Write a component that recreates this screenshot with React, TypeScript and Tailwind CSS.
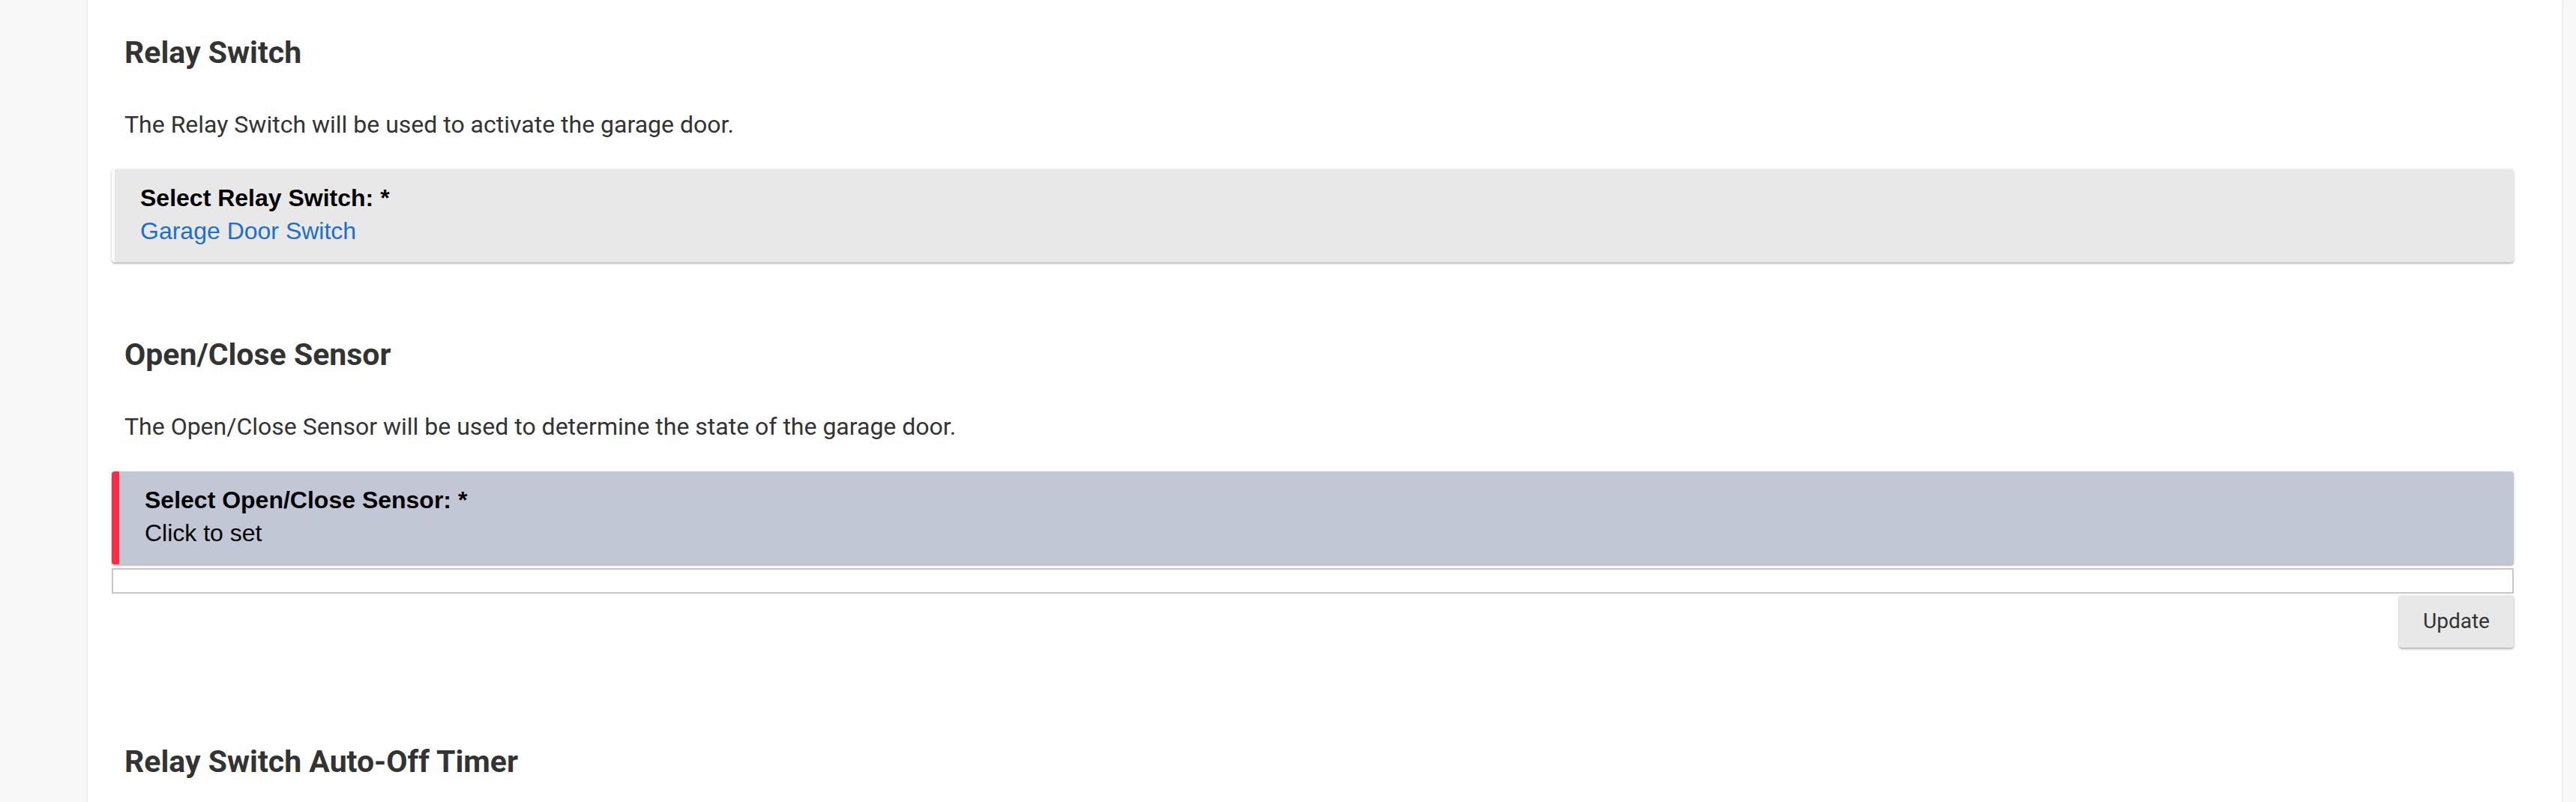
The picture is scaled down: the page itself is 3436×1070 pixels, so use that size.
import React from 'react';

const roboto = { fontFamily: 'Roboto, "Liberation Sans", sans-serif' };

function SectionTitle({ children, className = '' }: { children: React.ReactNode; className?: string }) {
  return (
    <h3 className={`px-[17px] text-[41px] leading-[48px] font-bold text-[#333333] ${className}`}>
      {children}
    </h3>
  );
}

function Description({ children }: { children: React.ReactNode }) {
  return <p className="mt-[52px] px-[17px] text-[32px] leading-[40px] text-[#333333]">{children}</p>;
}

function DeviceInput({
  label,
  value,
  invalid,
}: {
  label: string;
  value: string;
  invalid?: boolean;
}) {
  return (
    <div
      className={`mt-[40px] h-[124px] rounded-[4px] pl-[34px] pt-[16px] shadow-[0_2px_2px_rgba(0,0,0,0.22),0_0_4px_rgba(0,0,0,0.1)] ${
        invalid ? 'border-l-[10px] border-[#fd2b45] bg-[#c2c7d6]' : 'border-l-[4px] border-[#fbfbfb] bg-[#e8e8e8]'
      }`}
      style={{ fontFamily: '"Liberation Sans", Arial, sans-serif' }}
    >
      <div className="text-[32px] leading-[44px] font-bold text-black">{label}</div>
      <div className={`text-[32px] leading-[44px] ${invalid ? 'text-black' : 'text-[#1e6fc9]'}`}>{value}</div>
    </div>
  );
}

export default function App() {
  return (
    <div className="flex min-h-screen w-full bg-[#f8f8f8]" style={roboto}>
      <div className="w-[117px] shrink-0" />
      <main className="w-[3300px] shrink-0 bg-white pb-[40px] pl-[32px] pr-[64px] pt-[46px] shadow-[0_0_3px_rgba(0,0,0,0.15)]">
        {/* Relay switch */}
        <section>
          <SectionTitle>Relay Switch</SectionTitle>
          <Description>The Relay Switch will be used to activate the garage door.</Description>
          <DeviceInput label="Select Relay Switch: *" value="Garage Door Switch" />
        </section>

        {/* Contact sensor */}
        <section className="mt-[99px]">
          <SectionTitle>Open/Close Sensor</SectionTitle>
          <Description>The Open/Close Sensor will be used to determine the state of the garage door.</Description>
          <DeviceInput label="Select Open/Close Sensor: *" value="Click to set" invalid />
          <div className="mt-[5px] h-[34px] border-2 border-[#c6c6c6] bg-white" />
          <div className="mt-[2px] flex justify-end">
            <button className="h-[70px] w-[153px] rounded-[4px] bg-[#e8e8e8] text-[28px] text-[#333333] shadow-[0_2px_3px_rgba(0,0,0,0.3),0_0_2px_rgba(0,0,0,0.08)]">
              Update
            </button>
          </div>
        </section>

        {/* Auto-off timer */}
        <section className="mt-[128px]">
          <SectionTitle>Relay Switch Auto-Off Timer</SectionTitle>
        </section>
      </main>
      <div className="flex-1" />
    </div>
  );
}
